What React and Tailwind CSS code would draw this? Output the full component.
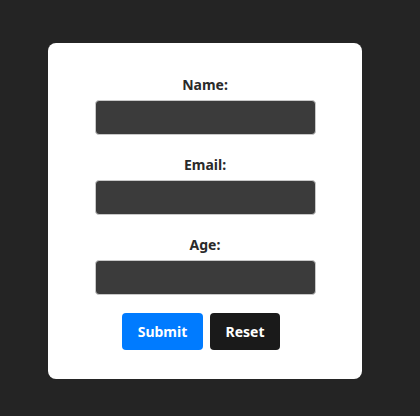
export default function App() {
  const fields = ["Name:", "Email:", "Age:"];
  return (
    <div className="w-[420px] h-[416px] bg-[#242424] pt-[43px] pl-[48px]" style={{ fontFamily: '"Noto Sans", "Open Sans", sans-serif' }}>
      <div className="w-[314px] h-[336px] bg-white rounded-[8px] pt-[32px] flex flex-col items-center">
        {fields.map((f) => (
          <div key={f} className="flex flex-col items-center mb-[20px]">
            <label className="text-[14px] leading-[20px] font-bold text-[#2a2a2a]">{f}</label>
            <div className="mt-[5px] w-[221px] h-[35px] bg-[#3b3b3b] border border-[#c8c8c8] rounded-[4px]" />
          </div>
        ))}
        <div className="flex gap-[7px] -mt-[2px] mr-[8px]">
          <button className="w-[81px] h-[37px] bg-[#007bff] text-white text-[14px] font-bold rounded-[4px]">Submit</button>
          <button className="w-[70px] h-[37px] bg-[#1a1a1a] text-white text-[14px] font-bold rounded-[4px]">Reset</button>
        </div>
      </div>
    </div>
  );
}
